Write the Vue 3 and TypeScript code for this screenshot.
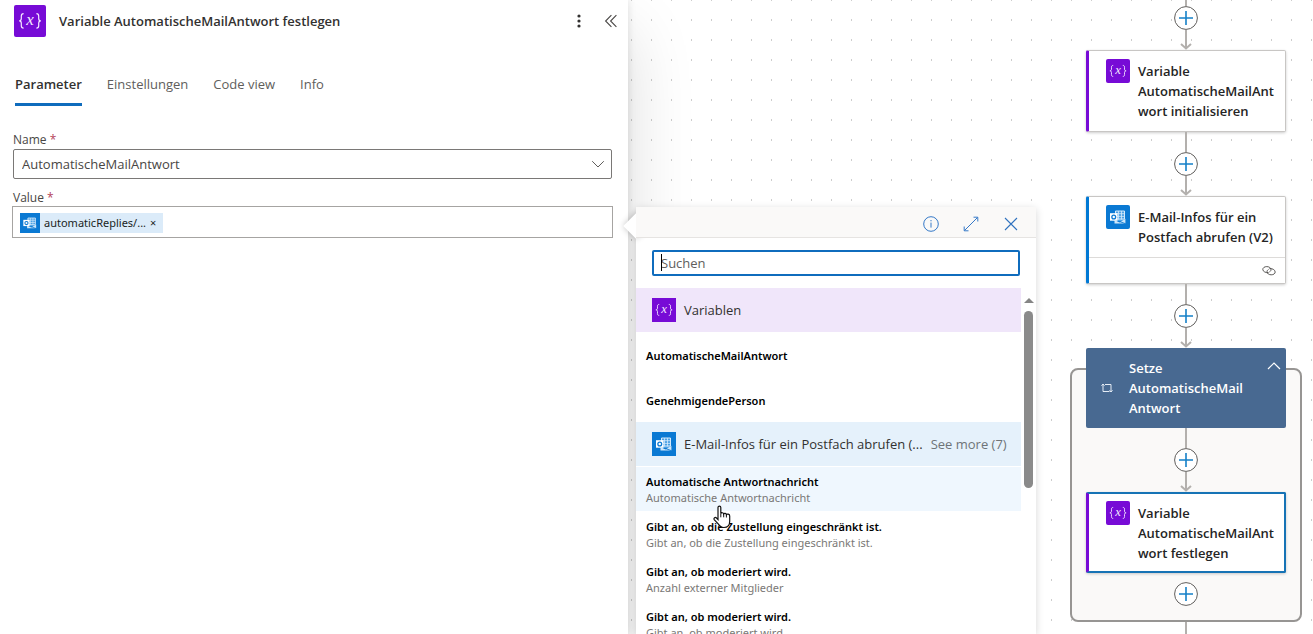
<script setup lang="ts">
import { ref } from 'vue'

interface Token {
  title: string
  description?: string
  hovered?: boolean
}

const tabs = ['Parameter', 'Einstellungen', 'Code view', 'Info']
const activeTab = ref('Parameter')
const variableName = ref('AutomatischeMailAntwort')
const valueText = ref('')
const search = ref('')

const variables: Token[] = [
  { title: 'AutomatischeMailAntwort' },
  { title: 'GenehmigendePerson' },
]

const mailTokens: Token[] = [
  { title: 'Automatische Antwortnachricht', description: 'Automatische Antwortnachricht', hovered: true },
  { title: 'Gibt an, ob die Zustellung eingeschränkt ist.', description: 'Gibt an, ob die Zustellung eingeschränkt ist.' },
  { title: 'Gibt an, ob moderiert wird.', description: 'Anzahl externer Mitglieder' },
  { title: 'Gibt an, ob moderiert wird.', description: 'Gibt an, ob moderiert wird.' },
]
</script>

<template>
  <div class="designer">
    <svg class="defs" width="0" height="0" aria-hidden="true">
      <symbol id="icon-variable" viewBox="0 0 32 32">
        <rect width="32" height="32" fill="#770bd6" />
        <g fill="none" stroke="#f4e8ff" stroke-width="1.2">
          <path d="M9.6 8.6C7.4 8.6 7.3 9.8 7.3 11v2.4c0 1.5-.6 2.4-2.1 2.4 1.5 0 2.1.9 2.1 2.4v2.6c0 1.2.1 2.4 2.3 2.4" />
          <path d="M22.4 8.6c2.2 0 2.3 1.2 2.3 2.4v2.4c0 1.5.6 2.4 2.1 2.4-1.5 0-2.1.9-2.1 2.4v2.6c0 1.2-.1 2.4-2.3 2.4" />
        </g>
      </symbol>
      <symbol id="icon-outlook" viewBox="0 0 24 24">
        <rect width="24" height="24" fill="#0a79d3" />
        <path d="M9.5 6h9v10h-9z" fill="#4aa0e4" />
        <path d="M9.5 6h9v8h-9z" fill="none" stroke="#e6f3fd" stroke-width=".9" />
        <path d="M12.5 6v8.5M15.5 6v8.5M9.5 8.7h9M9.5 11.4h9" stroke="#d4eafb" stroke-width=".8" />
        <path d="M8.5 15l5 2.5 5.9-3.8v4.7H8.5z" fill="#cfe7fa" />
        <path d="M13.5 16.5l6 2.2" stroke="#0a79d3" stroke-width=".9" />
        <rect x="4" y="8.2" width="7.5" height="7.5" fill="#fff" />
        <circle cx="7.75" cy="12" r="1.9" fill="none" stroke="#0a79d3" stroke-width="1.3" />
      </symbol>
      <symbol id="icon-plus" viewBox="0 0 24 24">
        <circle cx="12" cy="12" r="11.4" fill="#fff" stroke="#605e5c" stroke-width="1" />
        <path d="M12 5v14M5 12h14" stroke="#1580c8" stroke-width="1.6" />
      </symbol>
      <symbol id="icon-arrow" viewBox="0 0 12 20">
        <path d="M6 0v18" stroke="#b3b0ad" stroke-width="2" />
        <path d="M1 14l5 4.5 5-4.5" fill="none" stroke="#b3b0ad" stroke-width="2" />
      </symbol>
    </svg>

    <section class="panel">
      <header class="panel-head">
        <svg class="icon-lg" viewBox="0 0 32 32"><use href="#icon-variable" /><text class="glyph" x="16" y="20">x</text></svg>
        <h1>Variable AutomatischeMailAntwort festlegen</h1>
        <button class="plain" aria-label="Weitere Befehle">
          <svg width="16" height="16" viewBox="0 0 16 16" fill="#323130">
            <circle cx="8" cy="3" r="1.6" /><circle cx="8" cy="8" r="1.6" /><circle cx="8" cy="13" r="1.6" />
          </svg>
        </button>
        <button class="plain" aria-label="Bereich zuklappen">
          <svg width="16" height="16" viewBox="0 0 16 16" fill="none" stroke="#484644" stroke-width="1.1">
            <path d="M8.4 2.2L2.6 8l5.8 5.8M13.4 2.2L7.6 8l5.8 5.8" />
          </svg>
        </button>
      </header>

      <nav class="tabs" role="tablist">
        <button
          v-for="tab in tabs"
          :key="tab"
          role="tab"
          class="tab"
          :class="{ active: tab === activeTab }"
          :aria-selected="tab === activeTab"
          @click="activeTab = tab"
        >{{ tab }}</button>
      </nav>

      <form class="fields" @submit.prevent>
        <label for="var-name">Name <span class="req">*</span></label>
        <div class="select-wrap">
          <select id="var-name" v-model="variableName">
            <option>AutomatischeMailAntwort</option>
            <option>GenehmigendePerson</option>
          </select>
          <svg width="14" height="14" viewBox="0 0 14 14" fill="none" stroke="#605e5c"><path d="M1.2 4.2L7 10l5.8-5.8" /></svg>
        </div>
        <label for="var-value">Value <span class="req">*</span></label>
        <div class="token-box">
          <span class="token">
            <svg><use href="#icon-outlook" /></svg>
            <span>automaticReplies/...</span>
            <button class="plain" aria-label="Token entfernen">×</button>
          </span>
          <input id="var-value" v-model="valueText" type="text">
        </div>
      </form>
    </section>

    <main class="canvas">
      <div class="flow">
        <div class="link first">
          <i /><button class="add" aria-label="Aktion einfügen"><svg><use href="#icon-plus" /></svg></button><svg class="arrow"><use href="#icon-arrow" /></svg>
        </div>
        <article class="card purple">
          <div class="card-body">
            <svg class="icon" viewBox="0 0 32 32"><use href="#icon-variable" /><text class="glyph" x="16" y="20">x</text></svg>
            <span>Variable<br>AutomatischeMailAnt<br>wort initialisieren</span>
          </div>
        </article>
        <div class="link">
          <i /><button class="add" aria-label="Aktion einfügen"><svg><use href="#icon-plus" /></svg></button><svg class="arrow"><use href="#icon-arrow" /></svg>
        </div>
        <article class="card blue">
          <div class="card-body">
            <svg class="icon"><use href="#icon-outlook" /></svg>
            <span>E-Mail-Infos für ein<br>Postfach abrufen (V2)</span>
          </div>
          <footer>
            <svg width="14" height="12" viewBox="0 0 14 12" fill="none" stroke="#484644" stroke-width=".9">
              <path d="M6.6 7.6C4 8 .8 6.600.8 4.400.8 2.700 2.600 1.600 4.800 1.600s4.200 1.200 4.200 3c0 1-.6 1.800-1.500 2.300" />
              <path d="M7.400 3.600C10 3.200 13.200 4.800 13.200 7c0 1.700-1.800 2.800-4 2.800S5 8.600 5 6.800c0-1 .6-1.800 1.500-2.300" />
            </svg>
          </footer>
        </article>
        <div class="link">
          <i /><button class="add" aria-label="Aktion einfügen"><svg><use href="#icon-plus" /></svg></button><svg class="arrow"><use href="#icon-arrow" /></svg>
        </div>
        <section class="scope">
          <header class="scope-head">
            <svg width="12" height="10" viewBox="0 0 12 10" fill="none" stroke="#e6edf5" stroke-width="1">
              <path d="M2 1v7.5h6.500M.5 2.700L2 1l1.500 1.700M4 1.500h6V9M8.500 7.300L10 9l1.500-1.700" />
            </svg>
            <span>Setze<br>AutomatischeMail<br>Antwort</span>
            <button class="plain" aria-label="Zuklappen">
              <svg width="14" height="10" viewBox="0 0 14 10" fill="none" stroke="#fff" stroke-width="1.2"><path d="M1 8l6-6 6 6" /></svg>
            </button>
          </header>
          <div class="link">
            <i /><button class="add" aria-label="Aktion einfügen"><svg><use href="#icon-plus" /></svg></button><svg class="arrow"><use href="#icon-arrow" /></svg>
          </div>
          <article class="card purple selected">
            <div class="card-body">
              <svg class="icon" viewBox="0 0 32 32"><use href="#icon-variable" /><text class="glyph" x="16" y="20">x</text></svg>
              <span>Variable<br>AutomatischeMailAnt<br>wort festlegen</span>
            </div>
          </article>
          <button class="add last" aria-label="Aktion einfügen"><svg><use href="#icon-plus" /></svg></button>
        </section>
        <i class="tail" />
      </div>

      <aside class="picker">
        <header class="picker-head">
          <button class="plain" aria-label="Info">
            <svg width="16" height="16" viewBox="0 0 16 16" fill="none" stroke="#3579c8">
              <circle cx="8" cy="8" r="7.3" /><path d="M8 6.6v5M8 4v1.3" />
            </svg>
          </button>
          <button class="plain" aria-label="Erweitern">
            <svg width="16" height="16" viewBox="0 0 16 16" fill="none" stroke="#3579c8">
              <path d="M1.5 14.5l13-13M10.500 1.200h4.300v4.300M1.200 10.500v4.300h4.300" />
            </svg>
          </button>
          <button class="plain" aria-label="Schließen">
            <svg width="16" height="16" viewBox="0 0 16 16" fill="none" stroke="#2f72bf" stroke-width="1.1">
              <path d="M2 2l12 12M14 2L2 14" />
            </svg>
          </button>
        </header>
        <div class="search">
          <input v-model="search" type="text" placeholder="Suchen" aria-label="Suchen">
        </div>
        <div class="results">
          <div class="list">
            <div class="group violet">
              <svg viewBox="0 0 32 32"><use href="#icon-variable" /><text class="glyph" x="16" y="20">x</text></svg>
              <h2>Variablen</h2>
            </div>
            <button v-for="item in variables" :key="item.title" class="item">
              <strong>{{ item.title }}</strong>
            </button>
            <div class="group sky">
              <svg><use href="#icon-outlook" /></svg>
              <h2>E-Mail-Infos für ein Postfach abrufen (...</h2>
              <button class="plain more">See more (7)</button>
            </div>
            <button v-for="(item, i) in mailTokens" :key="i" class="item" :class="{ hovered: item.hovered }">
              <strong>{{ item.title }}</strong>
              <span>{{ item.description }}</span>
              <svg v-if="item.hovered" class="pointer" width="19" height="24" viewBox="0 0 19 24">
                <path
                  d="M5 2.5C5 .6 7.8.6 7.8 2.5v6c.4-1.200 2.700-1 2.900.4.600-1 2.500-.7 2.700.7.700-.9 3.300-.7 3.300 1.400v5.200c0 4-2.200 6.300-5.800 6.300-2.900 0-4.200-1.200-5.500-3.400L1.200 14.600c-.8-1.600 1-2.800 2.300-1.600L5 14.500z"
                  fill="#fff" stroke="#111" stroke-width="1.2"
                />
                <path d="M7.8 8.5v3.8M10.7 9v3.3M13.4 9.8v2.7" stroke="#111" />
              </svg>
            </button>
          </div>
          <div class="scrollbar"><i class="up" /><i class="thumb" /></div>
        </div>
      </aside>
    </main>
  </div>
</template>

<style>
body {
  margin: 0;
}
</style>

<style scoped>
.designer {
  display: grid;
  grid-template-columns: minmax(0, 628fr) minmax(0, 685fr);
  grid-template-rows: minmax(0, 1fr);
  height: 100vh;
  overflow: hidden;
  background: #fff;
  color: #323130;
  font-family: "Open Sans", "Noto Sans", sans-serif;
  font-size: 13px;
  line-height: 20px;
}
.designer * {
  box-sizing: border-box;
}
.defs {
  position: absolute;
}
.glyph {
  fill: #f4e8ff;
  font: italic 17px "Liberation Serif", serif;
  text-anchor: middle;
}
button,
input,
select {
  font: inherit;
  color: inherit;
}
.plain,
.add,
.tab,
.item {
  border: 0;
  padding: 0;
  background: none;
  cursor: pointer;
}
.plain svg,
.add svg {
  display: block;
}
h1,
h2 {
  margin: 0;
  font-size: inherit;
  font-weight: 600;
}

/* settings panel */
.panel {
  z-index: 1;
  padding: 5px 16px 0 13px;
  background: #fff;
  box-shadow: 0 0 8px rgba(0, 0, 0, 0.12), 0 32px 64px rgba(0, 0, 0, 0.14);
}
.panel-head {
  display: flex;
  align-items: center;
  gap: 16px;
  padding: 0 0 0 1px;
}
.panel-head h1 {
  flex: 1;
  margin-left: -3px;
}
.icon-lg {
  width: 32px;
  height: 32px;
  border-radius: 2px;
}
.panel-head .plain + .plain {
  margin-right: -7px;
}
.tabs {
  display: flex;
  gap: 25px;
  margin: 32px 0 26px 2px;
}
.tab {
  padding: 5px 0 9px;
  border-bottom: 3px solid transparent;
  color: #605e5c;
}
.tab.active {
  border-bottom-color: #0f6cbd;
  color: #323130;
  font-weight: 600;
}
.fields label {
  display: block;
  color: #484644;
  font-size: 12px;
  line-height: 16px;
}
.req {
  color: #b4435a;
}
.select-wrap {
  position: relative;
  margin: 1px 0 11px;
}
.select-wrap select {
  display: block;
  width: 100%;
  height: 30px;
  padding: 0 32px 0 8px;
  border: 1px solid #7a7876;
  border-radius: 2px;
  background: #fff;
  color: #484644;
  appearance: none;
}
.select-wrap svg {
  position: absolute;
  right: 7px;
  top: 8px;
  pointer-events: none;
}
.token-box {
  display: flex;
  align-items: center;
  height: 32px;
  margin: 0 -1px;
  padding: 2px 7px 0;
  border: 1px solid #a6a4a2;
}
.token-box input {
  flex: 1;
  min-width: 0;
  border: 0;
  outline: 0;
}
.token {
  display: flex;
  align-items: center;
  gap: 4px;
  height: 20px;
  padding-right: 7px;
  background: #dbebf9;
  color: #201f1e;
  font-family: "Noto Sans", sans-serif;
  font-size: 11px;
}
.token svg {
  width: 20px;
  height: 20px;
}

/* flow canvas */
.canvas {
  position: relative;
  display: flex;
  justify-content: flex-end;
  padding-right: 11px;
  background-image: conic-gradient(from 90deg at 19px 18px, #cdcdcd 90deg, transparent 90deg);
  background-position: 4px 1px;
  background-size: 20px 20px;
}
.flow {
  display: flex;
  flex-direction: column;
  align-items: center;
  width: 232px;
  font-weight: 600;
  color: #242424;
}
.link {
  display: flex;
  flex-direction: column;
  align-items: center;
  height: 64px;
}
.link.first {
  height: 50px;
}
.link i,
.tail {
  flex: 1;
  width: 2px;
  background: #b3b0ad;
}
.add,
.add svg {
  flex: none;
  width: 24px;
  height: 24px;
}
.arrow {
  flex: none;
  width: 12px;
  height: 20px;
}
.card {
  flex: none;
  width: 200px;
  border: 1px solid #c8c6c4;
  border-left: 3px solid;
  border-radius: 2px;
  background: #fff;
  box-shadow: 0 1px 3px rgba(0, 0, 0, 0.2);
}
.purple {
  border-left-color: #770bd6;
}
.blue {
  border-left-color: #0078d4;
}
.card-body {
  display: flex;
  gap: 8px;
  padding: 10px 0 10px 17px;
  white-space: nowrap;
}
.icon {
  flex: none;
  width: 24px;
  height: 24px;
  margin-top: -2px;
  border-radius: 2px;
}
.card footer {
  display: flex;
  align-items: center;
  justify-content: flex-end;
  height: 26px;
  padding-right: 9px;
  border-top: 1px solid #dddbd9;
}
.selected {
  border-width: 2px 2px 2px 3px;
  border-top-color: #1673b5;
  border-right-color: #1673b5;
  border-bottom-color: #1673b5;
}
.selected .card-body {
  padding: 9px 0 8px 17px;
}
.scope {
  display: flex;
  flex-direction: column;
  align-items: center;
  width: 100%;
  margin-top: 20px;
  border: 2px solid #979593;
  border-radius: 8px;
  background: #faf9f8;
}
.scope-head {
  display: flex;
  align-items: center;
  gap: 16px;
  width: 200px;
  margin-top: -22px;
  padding: 10px 5px 10px 15px;
  border-radius: 2px;
  background: #486991;
  color: #fff;
}
.scope-head span {
  flex: 1;
}
.scope-head .plain {
  align-self: flex-start;
  margin-top: 3px;
}
.last {
  margin: 9px 0 14px;
}

/* dynamic content picker */
.picker {
  position: absolute;
  z-index: 2;
  top: 207px;
  bottom: 0;
  left: 8px;
  display: flex;
  flex-direction: column;
  width: 400px;
  background: #fff;
  box-shadow: 0 2px 8px rgba(0, 0, 0, 0.16);
}
.picker::before {
  content: "";
  position: absolute;
  z-index: -1;
  top: 10px;
  left: -9px;
  width: 18px;
  height: 18px;
  background: #fff;
  box-shadow: 0 0 6px rgba(0, 0, 0, 0.24);
  transform: rotate(45deg);
}
.picker-head {
  display: flex;
  flex: none;
  align-items: center;
  justify-content: flex-end;
  gap: 24px;
  height: 31px;
  padding: 3px 17px 0 0;
  border-bottom: 1px solid #e6e4e2;
  background: #faf9f8;
}
.search {
  position: relative;
  flex: none;
  padding: 12px 16px;
}
.search input {
  display: block;
  width: 100%;
  height: 26px;
  padding: 0 7px;
  border: 2px solid #0f6cbd;
  border-radius: 2px;
  background: #fff;
  outline: 0;
}
.search input::placeholder {
  color: #605e5c;
  opacity: 1;
}
.search::after {
  content: "";
  position: absolute;
  top: 16px;
  left: 25px;
  width: 1px;
  height: 17px;
  background: #000;
}
.results {
  display: flex;
  flex: 1;
  min-height: 0;
}
.list {
  flex: 1;
  min-width: 0;
}
.group {
  display: flex;
  align-items: center;
  gap: 8px;
  height: 44px;
  padding: 0 16px;
}
.group svg {
  flex: none;
  width: 24px;
  height: 24px;
}
.group h2 {
  flex: 1;
  font-weight: 500;
  white-space: nowrap;
}
.violet {
  background: #f0e6fa;
}
.sky {
  background: #e5f1fb;
}
.more {
  color: #6e7478;
  white-space: nowrap;
}
.item {
  position: relative;
  display: flex;
  flex-direction: column;
  justify-content: center;
  width: 100%;
  height: 44px;
  margin-top: 1px;
  padding: 2px 10px 0;
  color: #000;
  font-family: "Noto Sans", sans-serif;
  font-size: 11px;
  line-height: 16px;
  text-align: left;
}
.item strong {
  font-weight: 600;
}
.item span {
  color: #7a7876;
}
.hovered {
  z-index: 1;
  background: #eff7fe;
}
.pointer {
  position: absolute;
  top: 38px;
  left: 77px;
}
.scrollbar {
  display: flex;
  flex: none;
  flex-direction: column;
  align-items: center;
  width: 15px;
  padding-top: 10px;
}
.up {
  border: 5px solid transparent;
  border-top: 0;
  border-bottom-color: #858585;
}
.thumb {
  width: 9px;
  height: 177px;
  margin-top: 8px;
  border-radius: 5px;
  background: #8a8a8a;
}
</style>
